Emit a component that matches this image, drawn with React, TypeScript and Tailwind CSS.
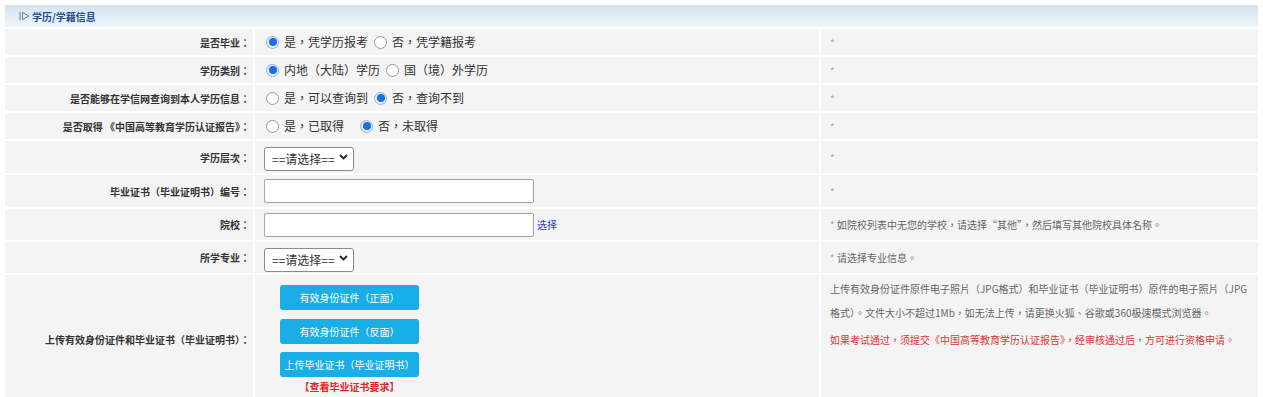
import React from "react";

function Radio({ checked }: { checked?: boolean }) {
  return checked ? (
    <span className="inline-flex h-[13px] w-[13px] shrink-0 items-center justify-center rounded-full border border-[#8fb6e8] bg-[#e3eefb]">
      <span className="h-[8px] w-[8px] rounded-full bg-[#1b6fe2]" />
    </span>
  ) : (
    <span className="inline-block h-[13px] w-[13px] shrink-0 rounded-full border border-[#9a9a9a] bg-white" />
  );
}

function RadioGroup({
  a,
  b,
  first,
  wide,
}: {
  a: string;
  b: string;
  first: boolean;
  wide?: boolean;
}) {
  return (
    <div className="flex items-center pl-[11px] text-[12px] text-[#333]">
      <Radio checked={first} />
      <span className="ml-[5px]">{a}</span>
      <span className={wide ? "ml-[16px] flex items-center" : "ml-[6px] flex items-center"}>
        <Radio checked={!first} />
      </span>
      <span className="ml-[5px]">{b}</span>
    </div>
  );
}

function Star() {
  return <span className="text-[#e88a8a]">*</span>;
}

function Select() {
  return (
    <div className="relative ml-[9px] h-[24px] w-[90px]">
      <select className="h-full w-full appearance-none rounded-[3px] border border-[#8a8a8a] bg-white pl-[7px] text-[12px] text-[#333] outline-none">
        <option>==请选择==</option>
      </select>
      <svg
        className="pointer-events-none absolute right-[6px] top-[9px]"
        width="9"
        height="6"
        viewBox="0 0 9 6"
      >
        <path d="M1 1 L4.5 4.5 L8 1" fill="none" stroke="#222" strokeWidth="1.8" />
      </svg>
    </div>
  );
}

function TextInput() {
  return (
    <input
      type="text"
      className="ml-[9px] h-[24px] w-[270px] rounded-[2px] border border-[#a3a3a3] bg-white outline-none"
    />
  );
}

function Row({
  label,
  h,
  children,
  hint,
}: {
  label: React.ReactNode;
  h: string;
  children?: React.ReactNode;
  hint?: React.ReactNode;
}) {
  return (
    <>
      <div className={`${h} flex items-center justify-end bg-[#f4f4f4] pr-[3px] text-[10px] font-bold text-[#333]`}>
        {label}
      </div>
      <div className={`${h} flex items-center bg-[#f4f4f4]`}>{children}</div>
      <div className={`${h} flex items-center bg-[#f4f4f4] pl-[9px] text-[10px] text-[#666]`}>
        {hint ?? <Star />}
      </div>
    </>
  );
}

export default function App() {
  return (
    <div className="min-h-[397px] bg-white px-[5px] pt-[5px] font-['Noto_Sans_CJK_TC','Noto_Sans_CJK_SC','Noto_Sans',sans-serif]">
      <div className="flex h-[22px] items-center bg-gradient-to-b from-[#d3e4f1] to-[#eef5fa] pl-[14px] text-[10px] font-bold text-[#25508a]">
        <svg width="11" height="10" viewBox="0 0 11 10" className="mr-[2px]">
          <path d="M1 1 V9" stroke="#5b7fb0" strokeWidth="1" />
          <path d="M3.5 1.2 L9.5 5 L3.5 8.8 Z" fill="none" stroke="#5b7fb0" strokeWidth="1" />
        </svg>
        学历/学籍信息
      </div>
      <div className="mt-[2px] grid grid-cols-[248px_564px_437px] gap-[2px]">
        <Row label="是否毕业：" h="h-[26px]">
          <RadioGroup a="是，凭学历报考" b="否，凭学籍报考" first />
        </Row>
        <Row label="学历类别：" h="h-[26px]">
          <RadioGroup a="内地（大陆）学历" b="国（境）外学历" first />
        </Row>
        <Row label="是否能够在学信网查询到本人学历信息：" h="h-[26px]">
          <RadioGroup a="是，可以查询到" b="否，查询不到" first={false} />
        </Row>
        <Row label="是否取得 《中国高等教育学历认证报告》：" h="h-[26px]">
          <RadioGroup a="是，已取得" b="否，未取得" first={false} wide />
        </Row>
        <Row label="学历层次：" h="h-[32px]">
          <Select />
        </Row>
        <Row label="毕业证书（毕业证明书）编号：" h="h-[32px]">
          <TextInput />
        </Row>
        <Row
          label="院校："
          h="h-[31px]"
          hint={
            <span>
              <Star /> 如院校列表中无您的学校，请选择“其他”，然后填写其他院校具体名称。
            </span>
          }
        >
          <TextInput />
          <span className="ml-[3px] text-[10px] text-[#3440b8]">选择</span>
        </Row>
        <Row
          label="所学专业："
          h="h-[31px]"
          hint={
            <span>
              <Star /> 请选择专业信息。
            </span>
          }
        >
          <Select />
        </Row>

        <div className="flex h-[128px] items-center justify-end bg-[#f4f4f4] pr-[3px] text-[10px] font-bold text-[#333]">
          上传有效身份证件和毕业证书（毕业证明书）：
        </div>
        <div className="h-[128px] bg-[#f4f4f4] pl-[25px] pt-[10px]">
          <div className="flex w-[139px] flex-col items-center">
            <button className="h-[25px] w-[139px] rounded-[3px] bg-[#1aaee6] text-[10px] text-white">
              有效身份证件（正面）
            </button>
            <button className="mt-[9px] h-[25px] w-[139px] rounded-[3px] bg-[#1aaee6] text-[10px] text-white">
              有效身份证件（反面）
            </button>
            <button className="mt-[8px] h-[25px] w-[139px] rounded-[3px] bg-[#1aaee6] text-[10px] text-white">
              上传毕业证书（毕业证明书）
            </button>
            <div className="mt-[3px] text-[10px] font-bold leading-[14px] text-[#e02828]">
              【查看毕业证书要求】
            </div>
          </div>
        </div>
        <div className="h-[128px] bg-[#f4f4f4] pl-[9px] pr-[10px] pt-[2px] text-[10px] leading-[24px] text-[#666]">
          <p>
            上传有效身份证件原件电子照片（JPG格式）和毕业证书（毕业证明书）原件的电子照片（JPG格式）。文件大小不超过1Mb，如无法上传，请更换火狐、谷歌或360极速模式浏览器。
          </p>
          <p className="mt-[3px] text-[#e03434]">
            如果考试通过，须提交《中国高等教育学历认证报告》，经审核通过后，方可进行资格申请。
          </p>
        </div>
      </div>
    </div>
  );
}
